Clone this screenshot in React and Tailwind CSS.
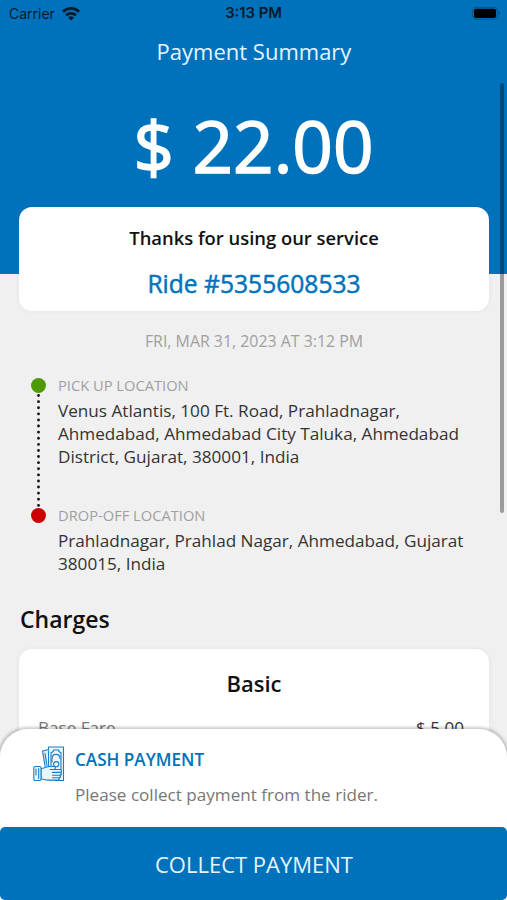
const ride = {
  id: '5355608533',
  total: '$ 22.00',
  date: 'FRI, MAR 31, 2023 AT 3:12 PM',
  pickup: 'Venus Atlantis, 100 Ft. Road, Prahladnagar, Ahmedabad, Ahmedabad City Taluka, Ahmedabad District, Gujarat, 380001, India',
  dropoff: 'Prahladnagar, Prahlad Nagar, Ahmedabad, Gujarat 380015, India',
}

const charges = [{ label: 'Base Fare', amount: '$ 5.00' }]

function WifiIcon() {
  return (
    <svg width="18" height="14" viewBox="0 0 18 14" fill="none" stroke="#051a2b" strokeWidth="2.8">
      <path d="M1 4.7a11.4 11.4 0 0 1 16 0" />
      <path d="M4 8.3a7.2 7.2 0 0 1 10 0" />
      <path d="M9 13.6 6 10.7a4.3 4.3 0 0 1 6 0z" fill="#051a2b" stroke="none" />
    </svg>
  )
}

function BatteryIcon() {
  return (
    <svg width="29" height="14" viewBox="0 0 29 14">
      <rect x="0.6" y="0.4" width="24.8" height="12" rx="3.4" fill="none" stroke="#06528a" strokeWidth="1" />
      <rect x="2" y="1.8" width="22" height="9.2" rx="2" fill="#000" />
      <path d="M26.6 4.5c2 .6 2 3.2 0 3.8z" fill="#06528a" />
    </svg>
  )
}

function CashIcon() {
  return (
    <svg width="32" height="36" viewBox="0 0 32 36" fill="none" stroke="#1a7cc4" strokeWidth="1.1" strokeLinejoin="round" strokeLinecap="round">
      <path d="M15.5 20.5V1h15v33.5H22" fill="#eaf6fd" />
      <path d="M18 20V6.5c1.6 0 2.5-.9 2.5-2.5h5.2c0 1.6.9 2.5 2.3 2.5V29" />
      <path d="M19 16v-3.5c0-5.5 8-5.500 8 0" />
      <circle cx="23.2" cy="18.2" r="2.6" />
      <path d="M15.500 3.500 9.500 5l2.600 15.500M12 7.500l2 12.500" fill="#d5ebf8" />
      <path d="M8 22.500c3.500-.3 5.500-2 8.500-2h4.500c2 0 2 3-.2 3h6.200c2 0 2 2.900 0 2.900 1.600.2 1.600 2.800-.3 2.800 1.300.3 1.100 2.600-.6 2.600.7 1.300-.2 2.300-1.500 2.300H15c-3 0-4-1.100-7-1.100z" fill="#eaf6fd" />
      <path d="M17 23.500h4M19.500 26.400H27M19.500 29.200h7M19.500 31.800h6.500" />
      <rect x="0.8" y="20.5" width="7.2" height="14" rx="1.3" fill="#eaf6fd" />
      <path d="M3 23v6M5.700 22.500v10" />
    </svg>
  )
}

function StatusBar() {
  return (
    <div className="grid h-[27px] grid-cols-3 items-center pl-[9px] pr-[6px] font-['Inter','Liberation_Sans',sans-serif] text-[#051a2b]">
      <div className="flex items-center gap-[7px] text-[14px]">
        <span>Carrier</span>
        <WifiIcon />
      </div>
      <span className="pr-[3px] text-center text-[14.8px] font-semibold">3:13 PM</span>
      <div className="flex justify-end">
        <BatteryIcon />
      </div>
    </div>
  )
}

function Stop({ label, address }) {
  return (
    <div>
      <h3 className="text-[14.7px] leading-[19px] text-[#a0a0a0]">{label}</h3>
      <p className="mt-[4px] text-[17.15px] leading-[23.2px] text-[#333]">{address}</p>
    </div>
  )
}

function RouteLine() {
  return (
    <div className="flex w-[15px] flex-col items-center pt-[2px]">
      <span className="size-[15px] shrink-0 rounded-full bg-[#4e9a06]" />
      <svg width="3" height="115" viewBox="0 0 3 115">
        <line x1="1.5" y1="2.5" x2="1.5" y2="115" stroke="#111" strokeWidth="2.8" strokeLinecap="round" strokeDasharray="0.1 6" />
      </svg>
      <span className="size-[15px] shrink-0 rounded-full bg-[#cc0000]" />
    </div>
  )
}

function PaymentSheet() {
  return (
    <div className="absolute inset-x-0 bottom-0 rounded-t-[28px] bg-white shadow-[0_0_3px_1.5px_rgba(0,0,0,0.2)]">
      <div className="flex h-[98px] gap-[10px] pl-[33px] pt-[17px]">
        <CashIcon />
        <div>
          <h2 className="mt-0.5 text-[17.1px] font-semibold leading-6 text-[#0072bc]">CASH PAYMENT</h2>
          <p className="mt-[11px] text-[17.1px] leading-6 text-[#777]">Please collect payment from the rider.</p>
        </div>
      </div>
      <button className="block h-[73px] w-full rounded-[5px] bg-[#0072bc] pl-px pt-0.5 text-[22px] text-[#e4f5ff]">COLLECT PAYMENT</button>
    </div>
  )
}

export default function App() {
  return (
    <div className="relative h-[900px] w-full overflow-hidden bg-[#f0f0f0] font-['Open_Sans','Noto_Sans',sans-serif]">
      <header className="h-[274px] bg-[#0072bc] text-center">
        <StatusBar />
        <h1 className="mt-[9px] pl-px text-[22px] leading-[30px] text-[#e4f5ff]">Payment Summary</h1>
        <p className="mt-[31px] text-[71px] leading-[98px] text-white [-webkit-text-stroke:1.5px_white]">{ride.total}</p>
      </header>

      <main className="-mt-[67px] pl-[19px] pr-[18px]">
        <section className="h-[104px] rounded-[13px] bg-white pt-[19px] text-center shadow-[0_0_5px_rgba(0,0,0,0.06)]">
          <h2 className="text-[18.4px] font-semibold leading-6 text-[#111]">Thanks for using our service</h2>
          <p className="mt-[18px] text-[24.6px] leading-8 text-[#0072bc] [-webkit-text-stroke:0.5px_#0072bc]">Ride #{ride.id}</p>
        </section>

        <p className="mt-[19px] text-center text-[15.9px] leading-[22px] text-[#a0a0a0]">{ride.date}</p>

        <section className="mt-[24px] flex gap-[12px] pl-[12px] pr-[10px]">
          <RouteLine />
          <div className="flex flex-1 flex-col gap-[37px]">
            <Stop label="PICK UP LOCATION" address={ride.pickup} />
            <Stop label="DROP-OFF LOCATION" address={ride.dropoff} />
          </div>
        </section>

        <h2 className="mt-[28px] pl-px text-[23px] font-semibold leading-8 text-[#111]">Charges</h2>
        <section className="mt-[14px] h-[200px] rounded-[13px] bg-white px-[19px] pt-[18px] shadow-[0_0_5px_rgba(0,0,0,0.06)]">
          <h3 className="text-center text-[22px] font-semibold leading-8 text-[#111]">Basic</h3>
          {charges.map((charge) => (
            <div key={charge.label} className="mt-[17px] flex justify-between pr-[6px] text-[17.1px] leading-6 text-[#777]">
              <span>{charge.label}</span>
              <span className="text-[#333]">{charge.amount}</span>
            </div>
          ))}
        </section>
      </main>

      {/* scroll indicator */}
      <div className="absolute right-[3px] top-[83px] h-[430px] w-[4px] rounded-full bg-black/35" />
      <PaymentSheet />
    </div>
  )
}
